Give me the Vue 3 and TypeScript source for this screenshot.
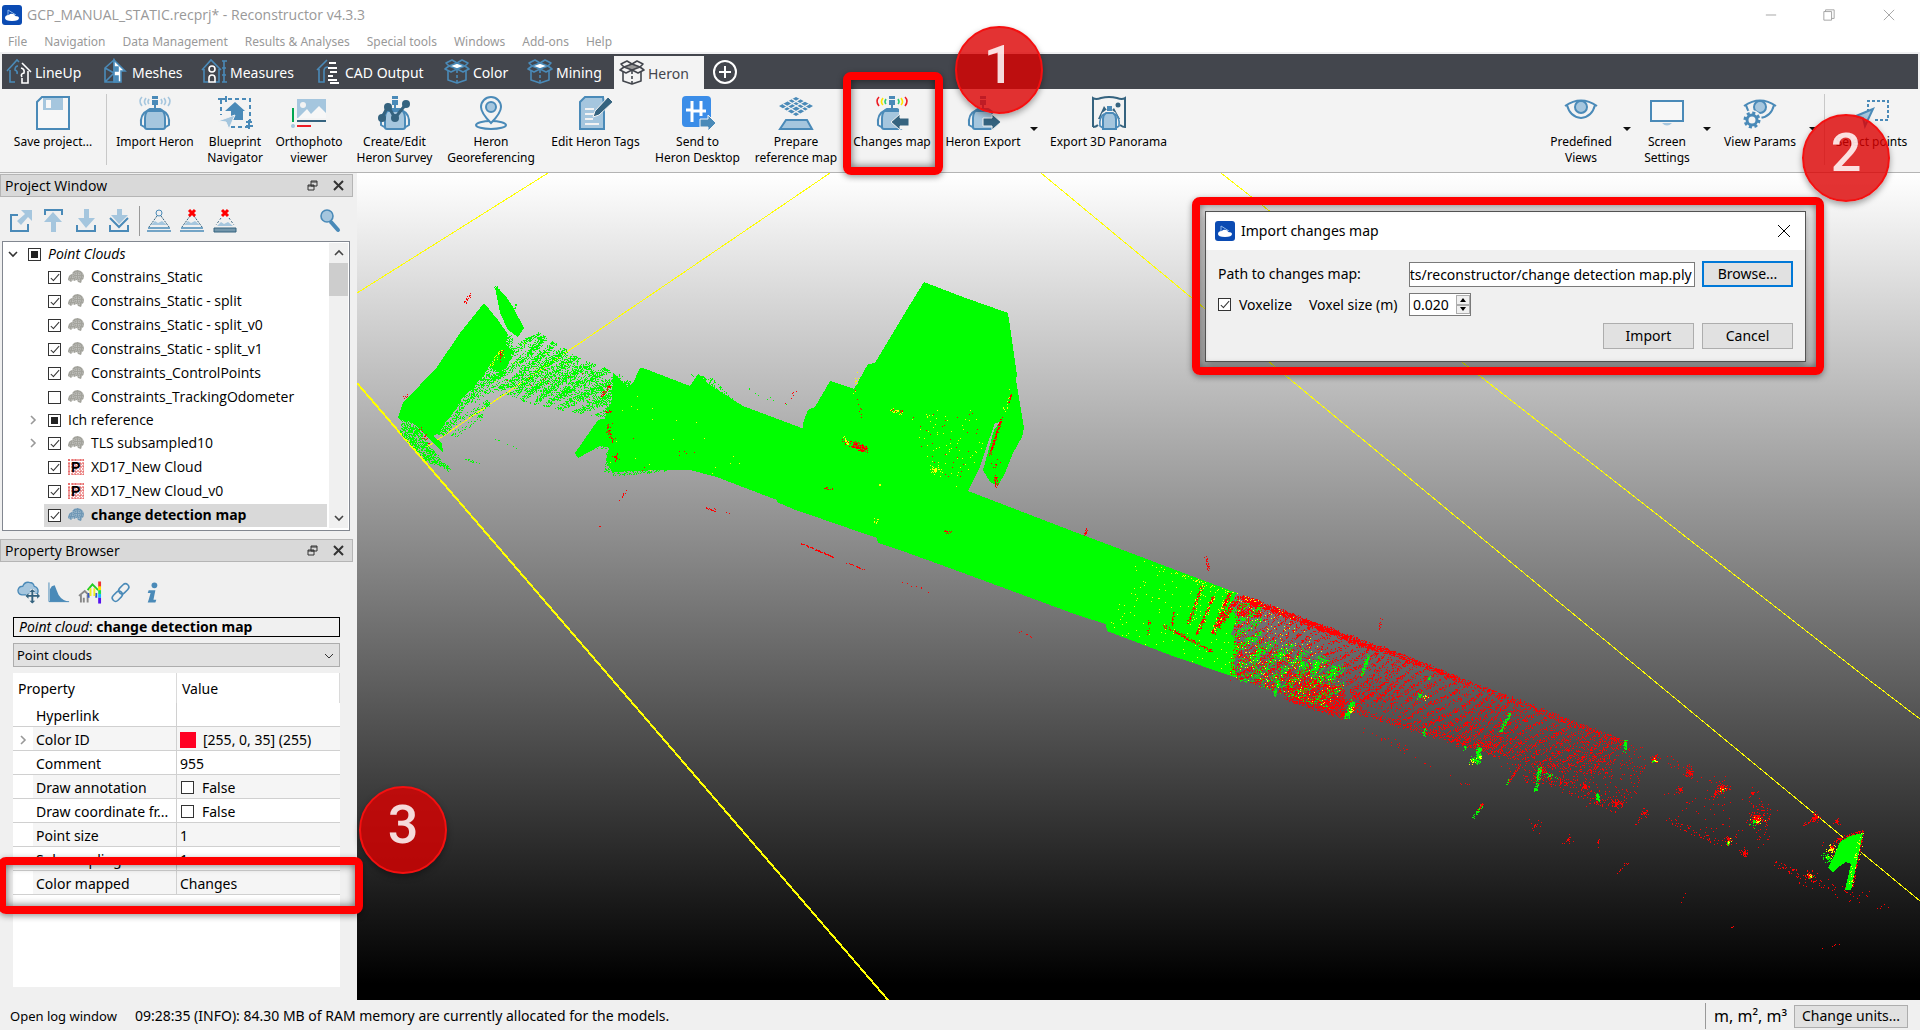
<script setup lang="ts">
import { onMounted, ref } from 'vue'

type Point = [number, number]

const menus = ['File', 'Navigation', 'Data Management', 'Results & Analyses', 'Special tools', 'Windows', 'Add-ons', 'Help']

/* ---------- icon drawings ---------- */
const B = '#4a8ab8'
const L = '#a5c6de'
const D = '#35637f'

const box = (stroke: string, lid: string) =>
  `<g fill="none" stroke="${stroke}" stroke-width="1.6" stroke-linejoin="round"><path fill="${lid}" d="M13 4l8 3-8 3-8-3z"/><path d="M13 4L8 1 2 4l3 3-4 3 6 3 6-3 6 3 6-3-4-3 3-3-6-3z"/><path d="M4 12v9l9 3 9-3v-9"/><path stroke-dasharray="3 2" d="M13 11v13"/></g>`

const pack = `<path fill="none" stroke="${B}" stroke-width="2" d="M9 15Q2 18 3 29l5 3M25 15q7 3 6 14l-5 3"/><path fill="${L}" stroke="${B}" stroke-width="2" d="M12 13h10q5 2 5 9v9q0 2-2 2H9q-2 0-2-2v-9q0-7 5-9z"/><path stroke="${B}" stroke-width="2" d="M10 15h14M17 8v6"/>`
const scanner = `<path fill="${B}" d="M14 0h6v3h-6zM14 4h6v5h-6z"/>`
const waves = (a: string, b: string, c: string) =>
  `<g fill="none" stroke-width="1.6"><path stroke="${a}" d="M4 1q-4 4 0 9M30 1q4 4 0 9"/><path stroke="${b}" d="M8 2q-3 4 0 7M26 2q3 4 0 7"/><path stroke="${c}" d="M11 3q-2 3 0 5M23 3q2 3 0 5"/></g>`
const eye = `<path fill="#f3f3f3" stroke="${B}" stroke-width="2" d="M1 10Q17-1 33 10M3 9q3 12 14 13Q28 21 31 9"/><circle cx="17" cy="11" r="6" fill="${L}" stroke="${B}" stroke-width="2"/>`

const icons: Record<string, string> = {
  lineup: `<g fill="none" stroke="${B}" stroke-width="1.6"><path d="M1 12L11 1l2 2M4 11v12h5M12 7q-3 0-3 4 3 1 2 4"/><path stroke="#fff" d="M16 4l9 9M22 12v12h-6v-5M15 9q4 1 3 5-4 1-2 4"/></g>`,
  meshes: `<g fill="none" stroke="${B}" stroke-width="1.6"><path d="M2 9l9-8v22H2zM2 9l9 5-9 9"/><path fill="#fff" d="M11 1l11 11h-4v11h-7z"/><path fill="${B}" d="M12 8h3v4h-3zM12 17h3v6h-3z"/></g>`,
  measures: `<g fill="none" stroke="${B}" stroke-width="1.6"><path d="M1 11L10 1l10 10M3 10v13h4M18 10v13h-4M23 2v21M21 2h5M21 9h4M21 16h4M21 23h5"/><g stroke="#fff"><circle cx="11" cy="10" r="3"/><path d="M8 23v-4q0-3 3-3t3 3v4z"/></g></g>`,
  cad: `<g fill="none" stroke="${B}" stroke-width="1.6"><path d="M1 11L11 1M3 10v13h5V12q0-4 4-4"/><path stroke="#fff" stroke-width="1.8" d="M13 4h7M12 9h9M14 13h7M12 17h5M12 21h9M14 24h9"/></g>`,
  box: box(B, '#fff'),
  boxDark: box('#43464d', '#999'),
  save: `<path fill="#f7f7f7" stroke="${B}" stroke-width="2" d="M6 1h27v32H1V6z"/><path fill="${L}" d="M7 2h20v12H7z"/><path fill="#f7f7f7" d="M10 4h5v8h-5z"/>`,
  import: waves(L, L, L) + scanner + pack,
  blueprint: `<g fill="none" stroke="${B}" stroke-width="2"><path stroke-dasharray="4 3" d="M3 3h29v24M3 4v15M31 31H12"/><path d="M0 3h7M8 0v6M28 30h7M28 26h6M31 24v9"/></g><path fill="${B}" d="M17 6l10 9h-2v9H13v-9H7z"/><path fill="${L}" stroke="#f3f3f3" d="M0 25l17-6-6 14-3-7z"/>`,
  ortho: `<path fill="${L}" d="M5 3h29v19H5z"/><circle cx="11" cy="9" r="3" fill="#f3f3f3"/><path fill="#f7f7f7" d="M6 22l9-9 4 5 8-8 7 7v5z"/><path fill="${D}" d="M5 24h29v2H5z"/><path fill="#00a651" d="M0 12h2v14H0z"/><path fill="#ed1c24" d="M5 29h14v2H5z"/><circle cx="1" cy="30" r="2" fill="${L}"/>`,
  survey: scanner + pack + `<path fill="none" stroke="${D}" stroke-width="3" d="M4 22l6-12 7 12L28 8"/><g fill="${D}"><circle cx="4" cy="22" r="4"/><circle cx="10" cy="11" r="4"/><circle cx="17" cy="22" r="4"/><circle cx="28" cy="8" r="4"/></g>`,
  pin: `<ellipse cx="17" cy="29" rx="15" ry="4" fill="none" stroke="${B}" stroke-width="2"/><path fill="#f3f3f3" stroke="${B}" stroke-width="2" d="M17 27Q7 17 7 11a10 10 0 0 1 20 0q0 6-10 16z"/><circle cx="17" cy="11" r="5" fill="${L}" stroke="${B}" stroke-width="2"/>`,
  tags: `<path fill="${L}" stroke="${B}" stroke-width="2" d="M6 1h18l1 8v24H1V6z"/><path stroke="#f3f3f3" stroke-width="2" d="M6 13h9M6 18h10M6 23h8M6 28h14"/><path fill="${D}" stroke="#f3f3f3" d="M14 21l2-6L29 1l5 5-14 13z"/>`,
  send: `<rect x="1" y="0" width="29" height="31" rx="4" fill="#3b8de8"/><path fill="none" stroke="#fff" stroke-width="3" d="M11 5v21M20 5v15M5 14h6M11 15h14"/><path fill="${B}" stroke="#f3f3f3" d="M19 23h8v-4l8 8-8 8v-4h-8z"/>`,
  prepare: `<path fill="${B}" d="M17 1l17 9-17 10L0 10z"/><path stroke="#f3f3f3" stroke-width="1.4" d="M4 8l17 10M9 5l17 10M13 3l17 10M21 3L4 13M26 5L8 15M30 8L13 18"/><path fill="${L}" stroke="${B}" stroke-width="2" d="M7 24h21l5 9H1z"/>`,
  changes: waves('#ed1c24', '#ffe600', '#2ecc71') + scanner + pack + `<path fill="#f3f3f3" d="M24 13h10v20H24z"/><path fill="${D}" stroke="#f3f3f3" d="M16 26l9-8v4h9v8h-9v4z"/>`,
  export: scanner + pack + `<path fill="#f3f3f3" d="M27 13h7v20h-7z"/><path fill="${D}" stroke="#f3f3f3" d="M35 26l-9-8v4h-9v8h9v4z"/>`,
  panorama: `<path fill="none" stroke="${D}" stroke-width="2" d="M1 31V2q3 2 8 0 8-2 16 0 5 2 8 0v29q-2 0-5-2M1 31q3 0 5-2"/><circle cx="26" cy="9" r="2.500" fill="${D}"/><path fill="${D}" d="M6 23l6-13 5 7 5-5 6 11z"/><path fill="#f3f3f3" d="M10 17l4-3h6l4 3 3 9-2 8H9l-2-8z"/><path fill="${B}" d="M15 10h5v5h-5z"/><path fill="none" stroke="${B}" stroke-width="1.600" d="M12 18q-5 3-4 12l3 2M23 18q5 3 4 12l-3 2"/><path fill="${L}" stroke="${B}" stroke-width="2" d="M14 17h7q3 2 3 6v10H11V23q0-4 3-6z"/>`,
  eye,
  screen: `<path fill="#f7f7f7" stroke="${B}" stroke-width="2" d="M1 5h32v20H1z"/><path fill="${L}" d="M12 27h10q-5 5-10 0z"/>`,
  params: eye + `<circle cx="9" cy="24" r="10" fill="#f3f3f3"/><circle cx="9" cy="24" r="5" fill="none" stroke="${B}" stroke-width="3"/><circle cx="9" cy="24" r="7" fill="none" stroke="${B}" stroke-width="3" stroke-dasharray="3 2.5"/>`,
  select: `<path fill="none" stroke="${B}" stroke-width="2" stroke-dasharray="3 2" d="M13 16V5h20v19H20"/><path fill="${L}" stroke="${B}" stroke-width="2" d="M1 20l17-7-8 17-2-8z"/>`,
  cloud: `<path fill="${L}" stroke="${B}" stroke-width="1.4" d="M5 14q-4-1-4-5 1-4 5-4 2-5 7-4 4 0 5 4 4 1 4 5 0 4-4 4z"/><path fill="none" stroke="#f0f0f0" stroke-width="4" d="M16 8v14M10 15h13"/><path fill="none" stroke="${D}" stroke-width="2" d="M16 9v13M10 15h13"/><path fill="${D}" d="M16 8l3 3h-6zM16 23l3-3h-6zM9 15l3-3v6zM24 15l-3-3v6z"/>`,
  histo: `<path fill="none" stroke="${B}" d="M1 1v20h21"/><path fill="${B}" d="M2 8l2-3 3-1 2 5q3 10 12 12H2z"/>`,
  colormap: `<g fill="none" stroke-width="2"><path stroke="#888" d="M0 15l6-5 5 5M2 14v8M5 22v-5M9 14v8"/><path stroke="#35c" d="M10 12v5M18 12v5"/><path stroke="#2c2" d="M9 9l5-6 6 6"/><path stroke="#ee2" d="M12 7v8M16 7v8"/></g><path fill="#e33" d="M20 0h3v6h-3z"/><path fill="#fd0" d="M20 5h3v4h-3z"/><path fill="#2d4" d="M20 9h3v4h-3z"/><path fill="#1bf" d="M20 13h3v4h-3z"/><path fill="#51e" d="M20 17h3v6h-3z"/>`,
  link: `<g fill="none" stroke="${B}" stroke-width="1.6"><rect x="-5.500" y="-3.500" width="12" height="7" rx="3.500" transform="translate(14 8) rotate(-45)"/><rect x="-6.500" y="-3.500" width="12" height="7" rx="3.500" transform="translate(8 15) rotate(-45)"/></g>`,
  info: `<circle cx="14" cy="4" r="3" fill="${B}"/><path fill="${B}" d="M8 9h7l-2 10h3l-1 3H7l1-3 2-7H7z"/>`,
  open: `<path fill="none" stroke="${B}" stroke-width="2" d="M9 6H2v16h17v-7"/><path fill="${L}" d="M12 1h11v11l-4-4-7 8-4-4 8-7z"/>`,
  up: `<path fill="none" stroke="${B}" stroke-width="2" d="M3 6V1h17v5"/><path fill="${L}" d="M11 3l9 10h-6v10H9V13H2z"/>`,
  down: `<path fill="none" stroke="${B}" stroke-width="2" d="M2 16v6h18v-6"/><path fill="${L}" d="M9 0h5v9h6l-9 10L3 9h6z"/>`,
  downAll: `<path fill="none" stroke="${B}" stroke-width="2" d="M2 16v6h18v-6M2 9l9 9 9-9"/><path fill="${L}" d="M9 0h5v6h6l-9 9L3 6h6z"/>`,
  cone: `<circle cx="12" cy="4" r="3" fill="none" stroke="${B}"/><path fill="none" stroke="${D}" stroke-dasharray="2 1" d="M10 7L2 18M14 7l8 11"/><path fill="${L}" d="M4 16l4-4 3 2 4-2 5 4z"/><path stroke="${B}" stroke-width="1.600" d="M1 19h22M0 22h24"/>`,
  coneDel: `<path fill="none" stroke="${D}" stroke-dasharray="2 1" d="M10 7L2 18M14 7l8 11"/><path fill="${L}" d="M4 16l4-4 3 2 4-2 5 4z"/><path stroke="${B}" stroke-width="1.600" d="M1 19h22M0 22h24"/><path stroke="#f00" stroke-width="3" d="M9 1l6 6M15 1L9 7"/>`,
  planeDel: `<path fill="none" stroke="${D}" stroke-dasharray="2 2" d="M8 9l-5 7M16 9l5 7"/><path fill="${L}" d="M4 17l4-4 3 2 4-2 5 4z"/><path fill="#7396ab" stroke="${D}" d="M1 19h22v4H1z"/><path stroke="#f00" stroke-width="3" d="M9 1l6 6M15 1L9 7"/>`,
  search: `<path stroke="${B}" stroke-width="4" stroke-linecap="round" d="M11 13l7 8"/><circle cx="7" cy="7" r="6" fill="${L}" stroke="${B}" stroke-width="1.600"/>`,
}

const tabs = [
  { label: 'LineUp', icon: 'lineup' },
  { label: 'Meshes', icon: 'meshes' },
  { label: 'Measures', icon: 'measures' },
  { label: 'CAD Output', icon: 'cad' },
  { label: 'Color', icon: 'box' },
  { label: 'Mining', icon: 'box' },
  { label: 'Heron', icon: 'boxDark' },
]

interface Tool { lines: string[]; icon: string; arrow?: boolean; marked?: boolean }
const tools: Tool[] = [
  { lines: ['Import Heron'], icon: 'import' },
  { lines: ['Blueprint', 'Navigator'], icon: 'blueprint' },
  { lines: ['Orthophoto', 'viewer'], icon: 'ortho' },
  { lines: ['Create/Edit', 'Heron Survey'], icon: 'survey' },
  { lines: ['Heron', 'Georeferencing'], icon: 'pin' },
  { lines: ['Edit Heron Tags'], icon: 'tags' },
  { lines: ['Send to', 'Heron Desktop'], icon: 'send' },
  { lines: ['Prepare', 'reference map'], icon: 'prepare' },
  { lines: ['Changes map'], icon: 'changes', marked: true },
  { lines: ['Heron Export'], icon: 'export', arrow: true },
  { lines: ['Export 3D Panorama'], icon: 'panorama' },
]
const viewTools: Tool[] = [
  { lines: ['Predefined', 'Views'], icon: 'eye', arrow: true },
  { lines: ['Screen', 'Settings'], icon: 'screen', arrow: true },
  { lines: ['View Params'], icon: 'params', arrow: true },
]

interface Node { name: string; kind: 'root' | 'group' | 'cloud' | 'photo' | 'active'; checked: boolean; expand?: boolean }
const nodes: Node[] = [
  { name: 'Point Clouds', kind: 'root', checked: false },
  { name: 'Constrains_Static', kind: 'cloud', checked: true },
  { name: 'Constrains_Static - split', kind: 'cloud', checked: true },
  { name: 'Constrains_Static - split_v0', kind: 'cloud', checked: true },
  { name: 'Constrains_Static - split_v1', kind: 'cloud', checked: true },
  { name: 'Constraints_ControlPoints', kind: 'cloud', checked: true },
  { name: 'Constraints_TrackingOdometer', kind: 'cloud', checked: false },
  { name: 'Ich reference', kind: 'group', checked: false, expand: true },
  { name: 'TLS subsampled10', kind: 'cloud', checked: true, expand: true },
  { name: 'XD17_New Cloud', kind: 'photo', checked: true },
  { name: 'XD17_New Cloud_v0', kind: 'photo', checked: true },
  { name: 'change detection map', kind: 'active', checked: true },
]

const properties = [
  { name: 'Hyperlink', value: '' },
  { name: 'Color ID', value: '[255, 0, 35] (255)', swatch: true },
  { name: 'Comment', value: '955' },
  { name: 'Draw annotation', value: 'False', check: true },
  { name: 'Draw coordinate fr...', value: 'False', check: true },
  { name: 'Point size', value: '1' },
  { name: 'Subsampling', value: '1' },
  { name: 'Color mapped', value: 'Changes' },
]

const path = ref('rts/reconstructor/change detection map.ply')
const pathBox = ref<HTMLInputElement | null>(null)
const voxelSize = ref('0.020')
const voxelize = ref(true)

/* Long paths show their end, where the file name is. */
onMounted(() => {
  if (pathBox.value) pathBox.value.scrollLeft = pathBox.value.scrollWidth
})

/* ---------- point cloud scene ---------- */
let seed = 20177
const rnd = () => {
  seed = (seed * 1664525 + 1013904223) % 4294967296
  return seed / 4294967296
}
const dot = (x: number, y: number) => `M${Math.floor(x)} ${Math.floor(y)}h1v1h-1z`

function inside(x: number, y: number, poly: Point[]) {
  let hit = false
  for (let i = 0, j = poly.length - 1; i < poly.length; j = i++) {
    const [xi, yi] = poly[i]
    const [xj, yj] = poly[j]
    if (yi > y !== yj > y && x < ((xj - xi) * (y - yi)) / (yj - yi) + xi) hit = !hit
  }
  return hit
}

/* Fills a polygon with single points; stripes > 0 thins them into slanted scan rows. */
function scatter(poly: Point[], density: number, stripes = 0) {
  const xs = poly.map((p) => p[0])
  const ys = poly.map((p) => p[1])
  const x0 = Math.min(...xs), x1 = Math.max(...xs), y0 = Math.min(...ys), y1 = Math.max(...ys)
  const n = (x1 - x0) * (y1 - y0) * density
  let d = ''
  for (let i = 0; i < n; i++) {
    const x = x0 + rnd() * (x1 - x0)
    const y = y0 + rnd() * (y1 - y0)
    if (!inside(x, y, poly)) continue
    if (stripes && Math.sin((x * 0.7 + y + Math.sin(x / 17) * 4) / stripes) < rnd() * 1.6 - 0.8) continue
    d += dot(x, y)
  }
  return d
}

function streak(x1: number, y1: number, x2: number, y2: number, width: number, n: number) {
  let d = ''
  for (let i = 0; i < n; i++) {
    const t = rnd()
    d += dot(x1 + (x2 - x1) * t + (rnd() - 0.5) * width, y1 + (y2 - y1) * t + (rnd() - 0.5) * width)
  }
  return d
}

function clump(x: number, y: number, r: number, n: number) {
  let d = ''
  for (let i = 0; i < n; i++) {
    const a = rnd() * 6.283
    const q = rnd() * rnd() * r
    d += dot(x + Math.cos(a) * q, y + Math.sin(a) * q)
  }
  return d
}

const solids = [
  /* far slab on the left */
  '484,303 498,320 507,333 506,345 500,353 492,362 483,376 472,388 463,397 455,410 447,420 439,433 433,436 442,443 443,452 435,445 423,433 412,422 400,420 398,417 403,403 437,367 460,333',
  '495,288 498,288 507,298 513,307 524,328 518,337 508,330 500,313 498,302',
  '503,342 512,350 508,366 500,372 490,367',
  '598,420 612,417 612,448 600,446 578,458 575,453',
  /* start of the tunnel */
  '613,373 627,387 633,383 640,368 643,368 690,386 698,374 710,385 743,406 807,430 968,491 1080,534 1237,593 1229,606 1238,618 1231,634 1240,648 1234,662 1237,678 1170,655 1107,631 1106,624 1080,616 955,570 897,549 878,543 877,538 793,509 777,502 777,500 740,486 717,477 690,470 660,470 612,472 606,460 612,437 605,417 612,400',
  /* side hall */
  '803,432 803,423 808,410 815,407 830,381 854,389 868,364 875,363 911,303 924,282 963,297 1008,313 1017,375 1016,380 1024,428 1022,437 1013,453 1005,473 998,486 990,482 983,470 988,452 994,430 1000,422 995,423 990,437 980,467 968,491 960,495 860,460',
]

const tunnelRed: Point[] = [[1237, 593], [1287, 612], [1400, 655], [1500, 693], [1500, 760], [1415, 725], [1370, 706], [1345, 717], [1237, 678]]
const tunnelFar: Point[] = [[1500, 693], [1560, 715], [1627, 742], [1600, 775], [1560, 772], [1500, 755]]
const tunnelEnd: Point[] = [[1580, 722], [1650, 750], [1640, 790], [1615, 815], [1570, 795], [1500, 768], [1500, 745]]

const green = [
  scatter([[506, 353], [517, 341], [540, 333], [557, 343], [577, 357], [617, 373], [637, 385], [623, 413], [603, 417], [570, 412], [527, 403], [503, 393], [487, 373]], 0.9, 2.2),
  scatter([[530, 350], [560, 350], [610, 380], [640, 386], [620, 410], [570, 400], [510, 388]], 0.35),
  scatter([[470, 380], [500, 372], [517, 387], [487, 403], [483, 417], [457, 437], [438, 435]], 0.3, 2),
  scatter([[480, 376], [495, 362], [505, 375], [470, 400], [446, 436], [436, 434]], 0.6),
  scatter([[402, 420], [415, 422], [430, 447], [452, 470], [427, 462], [400, 433]], 0.9),
  scatter([[490, 330], [512, 335], [514, 352], [503, 375], [485, 366]], 0.8),
  scatter([[600, 420], [616, 420], [620, 470], [604, 474], [606, 450], [590, 448]], 0.5),
  scatter([[612, 470], [690, 468], [645, 474], [612, 476]], 0.5),
  scatter([[690, 374], [712, 378], [735, 400], [700, 386]], 0.4),
  clump(540, 338, 6, 60), clump(533, 348, 8, 60), clump(487, 404, 5, 50), clump(480, 416, 5, 40), clump(497, 289, 4, 30),
  streak(466, 459, 479, 464, 2, 16), streak(492, 438, 517, 450, 3, 6), streak(745, 389, 792, 404, 8, 8),
  streak(420, 452, 452, 471, 3, 50), streak(517, 303, 514, 310, 2, 10),
].join('')

/* Unchanged points that lie over the changed part of the tunnel. */
const greenOver = [
  scatter([[1237, 636], [1290, 643], [1345, 665], [1343, 690], [1325, 700], [1237, 672]], 0.42, 3),
  scatter([[1232, 598], [1262, 606], [1262, 640], [1232, 650]], 0.6, 2),
  scatter([[1237, 670], [1290, 686], [1325, 700], [1330, 710], [1237, 680]], 0.2),
  clump(1318, 668, 12, 90), clump(1332, 670, 10, 50), clump(1302, 664, 12, 80), clump(1280, 655, 14, 90),
  streak(1369, 655, 1362, 675, 3, 90), streak(1353, 702, 1346, 718, 5, 160), streak(1279, 680, 1275, 696, 3, 60),
  streak(1260, 645, 1255, 668, 4, 80), streak(1317, 662, 1312, 676, 5, 60), streak(1335, 665, 1330, 685, 6, 50),
  streak(1425, 730, 1424, 736, 3, 20), clump(1420, 696, 6, 36), clump(1429, 679, 3, 12),
  streak(1510, 714, 1501, 731, 3, 80), streak(1479, 747, 1479, 763, 5, 110), clump(1473, 760, 5, 50), streak(1466, 745, 1464, 750, 2, 16),
  streak(1626, 740, 1625, 751, 3, 50), streak(1540, 767, 1538, 780, 4, 70), streak(1538, 784, 1535, 791, 3, 40), clump(1550, 776, 12, 20),
  streak(1482, 806, 1473, 818, 2, 30), streak(1509, 779, 1507, 785, 2, 8), streak(1598, 794, 1598, 801, 3, 40),
  clump(1654, 761, 4, 16), clump(1723, 790, 3, 8), clump(1754, 822, 8, 24), clump(1729, 843, 4, 16), clump(1811, 877, 4, 18), clump(1828, 858, 9, 70),
].join('')

const red = [
  scatter(tunnelRed, 0.42, 1.5),
  scatter([[1237, 640], [1290, 655], [1345, 690], [1345, 716], [1237, 678]], 0.5, 2.5),
  scatter([[1290, 672], [1345, 690], [1345, 716], [1285, 695]], 0.6),
  scatter([[1237, 596], [1260, 600], [1262, 618], [1237, 616]], 0.8),
  scatter([[1345, 690], [1400, 665], [1400, 700], [1362, 702]], 0.35, 2),
  scatter([[1420, 725], [1500, 690], [1530, 705], [1500, 755]], 0.18, 2),
  scatter(tunnelFar, 0.32, 1.6),
  scatter(tunnelEnd, 0.07),
  streak(1245, 599, 1380, 650, 6, 1300), streak(1380, 648, 1460, 680, 5, 420), streak(1460, 680, 1620, 742, 6, 360),
  streak(1340, 705, 1460, 742, 7, 320), streak(1285, 698, 1345, 717, 5, 200), streak(1460, 740, 1500, 752, 12, 150),
  /* scan rings cutting into the unchanged part */
  streak(1203, 585, 1188, 624, 3, 90), streak(1215, 594, 1197, 634, 3, 110), streak(1230, 594, 1213, 634, 4, 190), streak(1237, 600, 1217, 628, 5, 190),
  streak(1164, 626, 1213, 652, 3, 110), streak(1174, 612, 1172, 626, 2, 22), streak(1150, 620, 1147, 636, 3, 14), streak(1240, 614, 1235, 678, 10, 150),
  /* marks inside the green part */
  streak(853, 444, 866, 450, 6, 140), streak(844, 440, 848, 445, 4, 18), streak(825, 488, 834, 490, 2, 14), streak(944, 531, 956, 535, 3, 12),
  streak(1002, 418, 990, 455, 2, 120), streak(1012, 394, 1008, 404, 2, 16), streak(996, 476, 997, 487, 3, 36), clump(995, 465, 14, 10),
  scatter([[910, 410], [975, 410], [985, 450], [955, 488], [920, 450]], 0.008), streak(891, 410, 903, 412, 3, 14), streak(855, 390, 863, 420, 3, 8),
  streak(610, 386, 601, 397, 2, 36), streak(604, 413, 611, 411, 3, 10), streak(608, 426, 613, 442, 4, 30), clump(616, 457, 9, 20), scatter([[606, 420], [700, 450], [710, 475], [606, 470]], 0.003),
  streak(502, 350, 499, 362, 4, 16), streak(417, 422, 428, 444, 5, 16), scatter([[500, 380], [560, 365], [600, 375], [590, 400]], 0.006),
  streak(471, 294, 465, 303, 3, 18), streak(404, 398, 406, 396, 3, 6),
  /* stray returns */
  streak(628, 490, 620, 500, 2, 8), streak(706, 508, 716, 512, 1, 20), streak(699, 505, 735, 515, 1, 6), clump(600, 526, 2, 3),
  streak(800, 543, 833, 557, 1, 60), streak(847, 563, 865, 570, 1, 22), streak(895, 580, 930, 592, 2, 8), streak(1018, 632, 1040, 640, 3, 6),
  streak(1087, 529, 1085, 535, 2, 18), streak(1206, 557, 1209, 571, 3, 30), streak(1382, 617, 1379, 630, 2, 12), streak(784, 407, 800, 385, 2, 6),
  streak(1360, 728, 1400, 747, 5, 14), streak(1390, 742, 1450, 775, 8, 16), streak(1450, 783, 1470, 784, 1, 5),
  streak(1520, 765, 1507, 785, 2, 36), streak(1483, 803, 1478, 811, 2, 22), clump(1535, 825, 14, 16), clump(1568, 840, 12, 16), streak(1599, 839, 1597, 850, 2, 10), streak(1628, 862, 1619, 873, 4, 10),
  clump(1585, 787, 8, 50), clump(1543, 770, 16, 60), streak(1526, 779, 1572, 783, 8, 70), clump(1617, 803, 10, 70), clump(1598, 803, 14, 20), clump(1645, 813, 7, 40), streak(1641, 817, 1636, 825, 2, 8),
  clump(1655, 759, 6, 46), clump(1690, 773, 8, 60), streak(1660, 757, 1700, 775, 12, 20), clump(1722, 788, 10, 80), streak(1722, 788, 1712, 798, 3, 20), clump(1681, 790, 9, 24),
  clump(1753, 793, 8, 20), clump(1757, 818, 9, 130), clump(1757, 820, 24, 60), streak(1760, 800, 1765, 842, 16, 50), clump(1729, 840, 10, 46), clump(1745, 853, 7, 60),
  streak(1668, 820, 1720, 843, 8, 50), streak(1700, 780, 1760, 800, 20, 20), scatter([[1660, 790], [1750, 790], [1740, 840], [1680, 830]], 0.014),
  streak(1775, 863, 1800, 875, 6, 34), clump(1810, 876, 10, 60), streak(1800, 880, 1850, 893, 14, 40), clump(1816, 817, 8, 70), streak(1816, 818, 1802, 826, 2, 26), clump(1837, 822, 6, 18),
  clump(1832, 848, 12, 60), streak(1863, 832, 1838, 840, 4, 90), streak(1863, 832, 1852, 888, 3, 90), streak(1845, 900, 1868, 896, 10, 10), streak(1873, 909, 1888, 906, 4, 5),
  streak(1815, 953, 1840, 943, 2, 5), streak(1730, 927, 1736, 927, 1, 3), streak(1680, 904, 1686, 892, 1, 3),
].join('')

const yellow = [
  scatter([[1140, 558], [1237, 595], [1237, 678], [1107, 631]], 0.012), streak(1160, 568, 1260, 603, 3, 50), streak(1203, 585, 1190, 624, 5, 24), streak(1215, 594, 1198, 634, 5, 24), streak(1226, 600, 1213, 634, 6, 30),
  scatter([[1237, 593], [1290, 612], [1345, 680], [1340, 712], [1237, 678]], 0.03),
  scatter([[910, 410], [975, 410], [985, 450], [955, 488], [920, 450]], 0.016), streak(890, 410, 903, 414, 4, 18), streak(844, 438, 848, 444, 4, 20), clump(935, 470, 12, 40), streak(1014, 380, 1004, 412, 4, 12),
  streak(860, 368, 853, 396, 4, 10), clump(880, 485, 4, 6), clump(877, 522, 12, 10), scatter([[606, 380], [740, 440], [740, 480], [606, 470]], 0.002),
  streak(502, 350, 491, 366, 3, 22), scatter([[470, 380], [520, 330], [610, 380], [590, 405]], 0.004),
  clump(1426, 697, 6, 12), clump(1473, 762, 5, 10), clump(1480, 757, 7, 14), clump(1352, 710, 8, 16), clump(1758, 822, 10, 18), clump(1832, 850, 12, 40), streak(1862, 836, 1850, 888, 7, 40), clump(1811, 877, 5, 8), clump(1722, 789, 5, 6), clump(1655, 761, 4, 8), clump(1729, 842, 5, 8),
].join('')
</script>

<template>
  <div class="app">
    <header class="titlebar">
      <svg class="logo" viewBox="0 0 20 20" aria-hidden="true">
        <rect width="20" height="20" rx="3" fill="#0b4bb3" />
        <path d="M6 12V5l8 5" fill="none" stroke="#8fb8ea" />
        <path d="M3 13q0-3 4-3 1-2 4-1 2 0 2 2 4 0 4 2 0 3-7 3t-7-3z" fill="#fff" />
      </svg>
      <h1>GCP_MANUAL_STATIC.recprj* - Reconstructor v4.3.3</h1>
      <div class="window-buttons">
        <button type="button" aria-label="Minimize"><svg viewBox="0 0 14 14"><path d="M1 7h12" /></svg></button>
        <button type="button" aria-label="Restore"><svg viewBox="0 0 14 14"><path d="M1 3h9v10H1zM3 3V1h10v10h-3" /></svg></button>
        <button type="button" aria-label="Close"><svg viewBox="0 0 14 14"><path d="M1 1l12 12M13 1L1 13" /></svg></button>
      </div>
    </header>

    <nav class="menubar">
      <button v-for="m in menus" :key="m" type="button">{{ m }}</button>
    </nav>

    <div class="tabs" role="tablist">
      <button v-for="t in tabs" :key="t.label" type="button" role="tab" :class="['tab', { current: t.label === 'Heron' }]" :aria-selected="t.label === 'Heron'">
        <svg viewBox="0 0 26 26" v-html="icons[t.icon]"></svg>
        <span>{{ t.label }}</span>
      </button>
      <button type="button" class="add" aria-label="Add tab">
        <svg viewBox="0 0 24 24"><circle cx="12" cy="12" r="11" /><path d="M12 6v12M6 12h12" /></svg>
      </button>
    </div>

    <div class="ribbon">
      <button type="button" class="tool save">
        <svg viewBox="0 0 34 34" v-html="icons.save"></svg>
        <span>Save project...</span>
      </button>
      <i class="rule"></i>
      <div class="tools">
        <button v-for="t in tools" :key="t.icon" type="button" :class="['tool', { arrow: t.arrow, marked: t.marked }]">
          <svg viewBox="0 0 34 34" v-html="icons[t.icon]"></svg>
          <span v-for="l in t.lines" :key="l">{{ l }}</span>
        </button>
      </div>
      <div class="tools view">
        <button v-for="t in viewTools" :key="t.icon" type="button" class="tool arrow">
          <svg viewBox="0 0 34 34" v-html="icons[t.icon]"></svg>
          <span v-for="l in t.lines" :key="l">{{ l }}</span>
        </button>
      </div>
      <i class="rule"></i>
      <button type="button" class="tool select">
        <svg viewBox="0 0 34 34" v-html="icons.select"></svg>
        <span>Select points</span>
      </button>
      <b class="badge one">1</b>
      <b class="badge two">2</b>
    </div>

    <main class="work">
      <aside class="docks">
        <section class="dock">
          <header class="dock-title">
            <h2>Project Window</h2>
            <button type="button" aria-label="Float"><svg viewBox="0 0 11 11"><path d="M4 1h6v5H4zM4 2h6M1 5h6v5H1zM1 6h6" /></svg></button>
            <button type="button" aria-label="Close"><svg viewBox="0 0 11 11"><path class="heavy" d="M1 1l9 9M10 1l-9 9" /></svg></button>
          </header>
          <div class="dock-tools">
            <button v-for="i in ['open', 'up', 'down', 'downAll']" :key="i" type="button" :aria-label="i"><svg viewBox="0 0 24 24" v-html="icons[i]"></svg></button>
            <i></i>
            <button v-for="i in ['cone', 'coneDel', 'planeDel']" :key="i" type="button" :aria-label="i"><svg viewBox="0 0 24 24" v-html="icons[i]"></svg></button>
            <button type="button" class="search" aria-label="Search"><svg viewBox="0 0 24 24" v-html="icons.search"></svg></button>
          </div>
          <div class="tree">
            <ul>
              <li v-for="(n, k) in nodes" :key="n.name" :class="n.kind">
                <svg class="twist" viewBox="0 0 10 10"><path v-if="n.kind === 'root'" class="open" d="M1 3l4 4 4-4" /><path v-else-if="n.expand" d="M3 1l4 4-4 4" /></svg>
                <label :for="'node' + k">
                  <input :id="'node' + k" type="checkbox" :checked="n.checked" :indeterminate="n.kind === 'root' || n.kind === 'group'" />
                  <svg v-if="n.kind === 'cloud' || n.kind === 'active'" class="blob" viewBox="0 0 16 14">
                    <path d="M0 10Q0 5 4 4q1-4 6-4 5 1 6 6 0 3-2 4l-1 3-3-1-1-2-3 1-1-1-2 2z" />
                    <path class="mesh" d="M0 7h16M2 4h13M1 10h13M5 1v12M8 0v12M11 0v12" />
                  </svg>
                  <svg v-else-if="n.kind === 'photo'" class="photo" viewBox="0 0 16 16">
                    <path d="M0 1h16M0 5h16M0 8h16M0 12h16M0 15h16M1 0v16M5 0v16M8 0v16M12 0v16M15 0v16" />
                    <text x="3" y="13">P</text>
                  </svg>
                  <span>{{ n.name }}</span>
                </label>
              </li>
            </ul>
            <div class="scroll">
              <svg viewBox="0 0 10 10"><path d="M1 7l4-4 4 4" /></svg>
              <i></i>
              <svg viewBox="0 0 10 10"><path d="M1 3l4 4 4-4" /></svg>
            </div>
          </div>
        </section>

        <section class="dock grow">
          <header class="dock-title">
            <h2>Property Browser</h2>
            <button type="button" aria-label="Float"><svg viewBox="0 0 11 11"><path d="M4 1h6v5H4zM4 2h6M1 5h6v5H1zM1 6h6" /></svg></button>
            <button type="button" aria-label="Close"><svg viewBox="0 0 11 11"><path class="heavy" d="M1 1l9 9M10 1l-9 9" /></svg></button>
          </header>
          <div class="prop-tools">
            <button v-for="i in ['cloud', 'histo', 'colormap', 'link', 'info']" :key="i" type="button" :aria-label="i"><svg viewBox="0 0 24 24" v-html="icons[i]"></svg></button>
          </div>
          <p class="subject"><em>Point cloud</em>: <strong>change detection map</strong></p>
          <div class="pick">
            <select aria-label="Object type"><option>Point clouds</option></select>
            <svg viewBox="0 0 10 10"><path d="M1 3l4 4 4-4" /></svg>
          </div>
          <div class="sheet">
            <table>
              <colgroup><col class="c-twist" /><col class="c-name" /><col /></colgroup>
              <thead>
                <tr><th colspan="2">Property</th><th>Value</th></tr>
              </thead>
              <tbody>
                <tr v-for="p in properties" :key="p.name">
                  <td><svg v-if="p.swatch" class="twist" viewBox="0 0 10 10"><path d="M3 1l4 4-4 4" /></svg></td>
                  <td>{{ p.name }}</td>
                  <td>
                    <label v-if="p.check"><input type="checkbox" />{{ p.value }}</label>
                    <span v-else-if="p.swatch" class="colour"><i></i>{{ p.value }}</span>
                    <template v-else>{{ p.value }}</template>
                  </td>
                </tr>
              </tbody>
            </table>
            <i class="mark"></i>
          </div>
        </section>
        <b class="badge three">3</b>
      </aside>

      <section class="viewport" aria-label="3D view">
        <svg class="scene" viewBox="357 173 1563 827" preserveAspectRatio="xMidYMid slice" shape-rendering="crispEdges">
          <g class="grid-lines">
            <path d="M357 293L548 173M427 447L830 173M1041 173L1472 530 1653 680 1920 901M1221 173L1485 380 1869 680 1920 719" />
            <path class="near" d="M357 383L888 1000" />
          </g>
          <polygon v-for="p in solids" :key="p" :points="p" fill="#0f0" />
          <path :d="green" fill="#0f0" />
          <path :d="red" fill="#f00" />
          <path :d="greenOver" fill="#0f0" />
          <polygon points="1863,833 1860,848 1857,862 1851,890 1845,890 1851,864 1846,862 1840,866 1833,872 1828,868 1834,856 1840,842 1850,836" fill="#0f0" />
          <path :d="yellow" fill="#ff0" />
        </svg>

        <form class="dialog" @submit.prevent>
          <header>
            <svg class="logo" viewBox="0 0 20 20" aria-hidden="true">
              <rect width="20" height="20" rx="3" fill="#0b4bb3" />
              <path d="M6 12V5l8 5" fill="none" stroke="#8fb8ea" />
              <path d="M3 13q0-3 4-3 1-2 4-1 2 0 2 2 4 0 4 2 0 3-7 3t-7-3z" fill="#fff" />
            </svg>
            <h2>Import changes map</h2>
            <button type="button" aria-label="Close"><svg viewBox="0 0 14 14"><path d="M1 1l12 12M13 1L1 13" /></svg></button>
          </header>
          <div class="fields">
            <label for="path">Path to changes map:</label>
            <input id="path" ref="pathBox" v-model="path" type="text" />
            <button type="button" class="push focus">Browse...</button>
          </div>
          <div class="fields second">
            <label class="vox"><input v-model="voxelize" type="checkbox" />Voxelize</label>
            <label for="size">Voxel size (m)</label>
            <div class="spin">
              <input id="size" v-model="voxelSize" type="text" inputmode="decimal" />
              <div>
                <button type="button" aria-label="Increase"><svg viewBox="0 0 6 4"><path d="M0 4l3-4 3 4z" /></svg></button>
                <button type="button" aria-label="Decrease"><svg viewBox="0 0 6 4"><path d="M0 0l3 4 3-4z" /></svg></button>
              </div>
            </div>
          </div>
          <footer>
            <button type="submit" class="push">Import</button>
            <button type="button" class="push">Cancel</button>
          </footer>
          <i class="mark"></i>
        </form>
      </section>
    </main>

    <footer class="status">
      <button type="button" class="log">Open log window</button>
      <span>09:28:35 (INFO): 84.30 MB of RAM memory are currently allocated for the models.</span>
      <div class="units"><span>m, m², m³</span><button type="button" class="push">Change units...</button></div>
    </footer>
  </div>
</template>

<style>
body {
  margin: 0;
  background: #f0f0f0;
}
</style>

<style scoped>
.app {
  --ui: "Open Sans", "Noto Sans", sans-serif;
  --tahoma: "Noto Sans", "Open Sans", sans-serif;
  display: flex;
  flex-direction: column;
  min-height: 100vh;
  background: #f0f0f0;
  color: #000;
  font: 14px/20px var(--ui);
  overflow: hidden;
}
*, *::before, *::after { box-sizing: border-box; }
button {
  padding: 0;
  border: 0;
  background: none;
  color: inherit;
  font: inherit;
}
svg { display: block; flex: none; overflow: visible; }
h1, h2, p, ul { margin: 0; padding: 0; font: inherit; }
.logo { width: 20px; height: 20px; }

.titlebar {
  display: flex;
  align-items: center;
  height: 29px;
  padding-left: 2px;
  gap: 5px;
  background: #fff;
  color: #999;
}
.window-buttons { display: flex; margin-left: auto; }
.window-buttons button { display: grid; place-items: center; width: 58px; height: 29px; }
.window-buttons button:last-child { width: 62px; }
.window-buttons svg { width: 12px; height: 14px; fill: none; stroke: #999; }

.menubar {
  display: flex;
  gap: 17px;
  height: 25px;
  padding: 2px 8px 0;
  background: #fff;
  border-bottom: 2px solid #f0f0f2;
  color: #999;
  font: 12px/20px var(--tahoma);
}

.tabs {
  display: grid;
  grid-template-columns: 97px 98px 115px 128px 83px 87px 90px auto;
  justify-content: start;
  height: 35px;
  margin: 0 2px;
  padding-left: 4px;
  background: #43464d;
  color: #fff;
  font: 14px/20px var(--tahoma);
}
.tab { display: flex; align-items: center; gap: 3px; }
.tab span { padding-top: 2px; }
.tab svg { width: 26px; height: 26px; }
.tab.current { margin: 2px 0 0; padding-left: 5px; background: #f3f3f3; color: #43464d; }
.add { padding: 0 0 0 9px; }
.add svg { width: 24px; height: 24px; fill: none; stroke: #fff; stroke-width: 2; }

.ribbon {
  position: relative;
  display: flex;
  height: 84px;
  padding-right: 2px;
  background: #f3f3f3;
  border-bottom: 1px solid #b4b4b4;
  font: 12px/16px var(--tahoma);
}
.rule { width: 1px; margin: 5px 0 7px; background: #c8c8c8; }
.tool {
  position: relative;
  display: flex;
  flex-direction: column;
  align-items: center;
  padding-top: 7px;
  white-space: nowrap;
}
.tool svg { width: 34px; height: 34px; margin-bottom: 4px; }
.save { width: 106px; }
.tools { display: grid; grid-template-columns: 92px 68px 80px 91px 102px 107px 97px 100px 92px 90px 147px; margin-left: 2px; }
.tools .tool:last-child { padding-left: 14px; }
.tools.view { grid-template-columns: 80px 68px 94px; gap: 12px; margin: 0 17px 0 auto; }
.tools.view .tool:last-child { padding-left: 0; }
.select { width: 93px; }
.arrow::after {
  content: "";
  position: absolute;
  left: calc(100% + 2px);
  top: 38px;
  border: 4px solid transparent;
  border-top-color: #111;
  border-bottom: 0;
}

.mark, .marked::before {
  content: "";
  position: absolute;
  border: 8px solid #f00;
  border-radius: 8px;
  box-shadow: inset 0 0 8px rgba(0, 0, 0, 0.6), 0 2px 6px rgba(0, 0, 0, 0.4);
  pointer-events: none;
  z-index: 2;
}
.marked::before { inset: -17px -5px -3px -3px; }
.badge {
  position: absolute;
  display: grid;
  place-items: center;
  width: 88px;
  height: 88px;
  padding-bottom: 10px;
  border: 2px solid #f51010;
  border-radius: 50%;
  background: rgba(220, 0, 0, 0.8);
  box-shadow: 0 3px 6px rgba(0, 0, 0, 0.35);
  color: rgba(255, 255, 255, 0.85);
  font: 500 54px/54px Roboto, "Liberation Sans", sans-serif;
  pointer-events: none;
  z-index: 5;
}
.one { left: 955px; top: -63px; }
.two { right: 30px; top: 25px; }
.three { left: 359px; bottom: 126px; }

.work { display: flex; flex: 1; }
.docks { position: relative; display: flex; flex-direction: column; width: 357px; flex: none; padding-top: 1px; }
.dock { display: flex; flex-direction: column; width: 353px; }
.grow { flex: 1; margin-top: 8px; }
.dock-title {
  display: flex;
  align-items: center;
  height: 23px;
  padding: 0 8px 0 4px;
  gap: 15px;
  border: 1px solid #b5b5b5;
  background: #d9d9d9;
}
.dock-title h2 { margin-right: auto; }
.dock-title svg { width: 11px; height: 11px; fill: none; stroke: #333; }
.dock-title .heavy { stroke-width: 2; }
.dock-tools { display: flex; align-items: center; height: 44px; padding: 3px 11px 0 9px; gap: 9px; }
.dock-tools svg { width: 24px; height: 24px; }
.dock-tools i { width: 1px; height: 30px; margin: 0 -2px; background: #999; }
.dock-tools .search { margin: 0 0 0 auto; width: 22px; }

.tree {
  display: flex;
  width: 348px;
  height: 290px;
  margin-left: 2px;
  padding: 1px 1px 2px 4px;
  border: 1px solid #828790;
  background: #fff;
}
.tree ul { flex: 1; list-style: none; white-space: nowrap; }
.tree li { display: flex; align-items: center; height: 24px; padding-left: 20px; }
.tree .root { height: 22px; padding-left: 0; font-style: italic; }
.tree .group { height: 22px; }
.tree label { display: flex; flex: 1; align-items: center; gap: 7px; padding-left: 4px; height: 23px; margin-left: 6px; }
.active label { background: #d9d9d9; font-weight: 700; margin-right: 2px; }
.twist { width: 10px; height: 10px; margin-left: 1px; fill: none; stroke: #999; stroke-width: 1.6; }
.twist .open { stroke: #333; }
.blob { width: 16px; height: 14px; fill: #a3a39c; }
.blob .mesh { fill: none; stroke: #fff; stroke-opacity: 0.35; stroke-width: 1; stroke-dasharray: 1 1; }
.active .blob { fill: #6f97b5; }
.photo { width: 16px; height: 16px; stroke: #e04040; stroke-dasharray: 2 1; }
.photo text { fill: #000; stroke: none; font: bold 14px "Liberation Sans", sans-serif; }

input[type="checkbox"] {
  appearance: none;
  position: relative;
  flex: none;
  width: 13px;
  height: 13px;
  margin: 0;
  border: 1px solid #333;
  background: #fff;
}
input[type="checkbox"]:checked::after {
  content: "";
  position: absolute;
  left: 4px;
  top: 0;
  width: 4px;
  height: 9px;
  border: solid #333;
  border-width: 0 1px 1px 0;
  transform: rotate(42deg);
}
input[type="checkbox"]:indeterminate::after { content: ""; position: absolute; inset: 2px; background: #222; }

.scroll { display: flex; flex-direction: column; align-items: center; width: 19px; padding: 5px 0; background: #f0f0f0; }
.scroll svg { width: 10px; height: 10px; fill: none; stroke: #444; stroke-width: 1.6; }
.scroll i { width: 19px; height: 33px; margin: 5px 0 auto; background: #cdcdcd; }

.prop-tools { display: flex; gap: 8px; padding: 19px 17px 12px; }
.prop-tools svg { width: 23px; height: 24px; }
.subject, .pick, .sheet { width: 327px; margin-left: 13px; }
.subject { height: 20px; border: 1px solid #000; padding-left: 5px; font: 14px/18px var(--tahoma); }
.pick { position: relative; margin-top: 6px; }
.pick select {
  appearance: none;
  width: 100%;
  height: 24px;
  padding: 0 3px;
  border: 1px solid #adadad;
  border-radius: 0;
  background: #e1e1e1;
  color: #000;
  font: 13px/20px var(--tahoma);
}
.pick svg { position: absolute; right: 6px; top: 8px; width: 10px; height: 10px; fill: none; stroke: #333; }
.sheet { position: relative; flex: 1; margin-top: 6px; margin-bottom: 13px; background: #fff; }
table { width: 100%; table-layout: fixed; border-collapse: separate; border-spacing: 0; font: 14px/20px var(--tahoma); }
.c-twist { width: 20px; }
.c-name { width: 144px; }
th { height: 30px; padding: 2px 5px 0; text-align: left; font-weight: 400; border-right: 1px solid #dadada; }
td { height: 24px; padding: 2px 3px 0; border-bottom: 1px solid #d0d0d0; white-space: nowrap; }
td:nth-child(2) { border-right: 1px solid #d0d0d0; }
td:nth-child(1) { padding: 2px 4px 0; }
tbody tr:nth-child(even) td:not(:first-child) { background: #f5f5f5; }
td label { display: flex; align-items: center; gap: 8px; padding-left: 1px; }
.colour { display: flex; align-items: center; gap: 7px; }
.colour i { width: 16px; height: 16px; background: #ff0023; }
.sheet .mark { top: 184px; left: -15px; right: -23px; height: 57px; }

.viewport { position: relative; flex: 1; overflow: hidden; background: linear-gradient(#fff, #000 98%); }
.scene { position: absolute; inset: 0; width: 100%; height: 100%; }
.grid-lines path { fill: none; stroke: #ff0; stroke-width: 1; }
.grid-lines .near { stroke-width: 2; }

.dialog {
  position: absolute;
  top: 38px;
  right: 114px;
  width: 601px;
  height: 151px;
  border: 1px solid #555;
  background: #f0f0f0;
  box-shadow: 0 2px 8px rgba(0, 0, 0, 0.4);
  font: 14px/20px var(--tahoma);
}
.dialog .mark { inset: -15px -19px -14px -14px; }
.dialog header { display: flex; align-items: center; height: 38px; padding: 0 14px 0 9px; gap: 6px; background: #fff; }
.dialog header button { margin-left: auto; }
.dialog header svg:not(.logo) { width: 14px; height: 14px; fill: none; stroke: #000; }
.fields { display: flex; align-items: center; height: 26px; margin: 11px 12px 0; }
#path {
  width: 286px;
  height: 25px;
  margin: 0 7px 0 auto;
  padding: 0 2px 0 0;
  border: 1px solid #7a7a7a;
  background: #fff;
  font: 14px/20px var(--tahoma);
}
.push { width: 91px; height: 26px; border: 1px solid #adadad; background: #e1e1e1; }
.push.focus { border: 2px solid #0078d7; }
.fields.second { height: 23px; margin-top: 6px; }
.vox { display: flex; gap: 8px; align-items: center; width: 91px; }
.second > label:nth-child(2) { width: 100px; }
.spin { display: flex; width: 62px; height: 23px; border: 1px solid #7a7a7a; background: #fff; }
.spin > input { width: 46px; padding: 0 3px; border: 0; background: none; font: 14px/20px var(--tahoma); }
.spin > div { display: flex; flex-direction: column; width: 14px; padding: 1px 0; }
.spin button { display: grid; place-items: center; flex: 1; border: 1px solid #adadad; background: #f0f0f0; }
.spin svg { width: 6px; height: 4px; }
.dialog footer { display: flex; justify-content: flex-end; gap: 8px; margin: 7px 12px 0; }

.status { display: flex; align-items: center; height: 30px; padding: 2px 12px 0 10px; gap: 18px; font: 14px/20px var(--tahoma); }
.log { font-size: 13px; }
.units { display: flex; align-items: center; gap: 7px; height: 26px; margin-left: auto; padding-left: 8px; border-left: 1px solid #999; }
.units span { font-size: 16px; }
.units .push { width: 114px; height: 23px; }
</style>
